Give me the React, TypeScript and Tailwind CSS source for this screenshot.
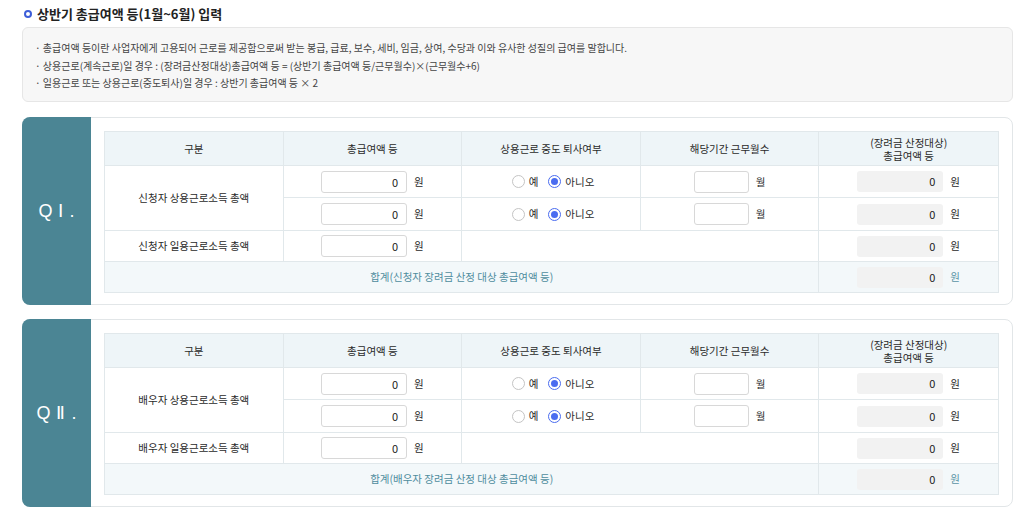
import React from "react";

const font = { fontFamily: '"Noto Sans CJK KR", "Noto Sans", sans-serif' };

function Radio({ checked, label }: { checked?: boolean; label: string }) {
  return (
    <span className="inline-flex items-center gap-[4px]">
      {checked ? (
        <span className="w-[13px] h-[13px] rounded-full border border-[#4a6cf0] flex items-center justify-center bg-white">
          <span className="w-[7px] h-[7px] rounded-full bg-[#4a6cf0]" />
        </span>
      ) : (
        <span className="w-[13px] h-[13px] rounded-full border border-[#c4c4c4] bg-white" />
      )}
      <span>{label}</span>
    </span>
  );
}

function Amount({ unit = "원", readOnly, teal }: { unit?: string; readOnly?: boolean; teal?: boolean }) {
  return (
    <div className="flex items-center justify-center gap-[7px]">
      <div
        className={
          readOnly
            ? "w-[86px] h-[21px] rounded-[3px] bg-[#f2f2f2] text-right pr-[8px] leading-[21px] text-[11px] text-[#222]"
            : "w-[86px] h-[22px] rounded-[3px] border border-[#d8d8d8] bg-white text-right pr-[8px] leading-[20px] text-[11px] text-[#222]"
        }
      >
        0
      </div>
      <span className={teal ? "text-[#5a95a6]" : ""}>{unit}</span>
    </div>
  );
}

function Month() {
  return (
    <div className="flex items-center justify-center gap-[7px]">
      <div className="w-[55px] h-[22px] rounded-[3px] border border-[#d8d8d8] bg-white" />
      <span>월</span>
    </div>
  );
}

function Section({ label, who }: { label: string; who: string }) {
  const cell = "border-r border-[#e1e8eb] last:border-r-0";
  return (
    <div className="flex h-[188px] border border-[#e2e6e8] rounded-[8px] bg-white">
      <div className="w-[69px] shrink-0 -my-px -ml-px bg-[#4b8594] rounded-l-[8px] flex items-center justify-center">
        <span className="text-white text-[18px] tracking-[6px] pl-[6px]" style={{ fontFamily: '"Liberation Sans", sans-serif' }}>
          {label}
        </span>
      </div>
      <div className="flex-1 p-[13px]">
        <div className="border border-[#e1e8eb] text-[10.5px] text-[#2a2a2a]">
          <div className="grid grid-cols-5 h-[34px] bg-[#eef5f8] border-b border-[#e1e8eb]">
            <div className={`${cell} flex items-center justify-center`}>구분</div>
            <div className={`${cell} flex items-center justify-center`}>총급여액 등</div>
            <div className={`${cell} flex items-center justify-center`}>상용근로 중도 퇴사여부</div>
            <div className={`${cell} flex items-center justify-center`}>해당기간 근무월수</div>
            <div className={`${cell} flex flex-col items-center justify-center leading-[13px]`}>
              <span>(장려금 산정대상)</span>
              <span>총급여액 등</span>
            </div>
          </div>
          <div className="grid grid-cols-5 border-b border-[#e1e8eb]">
            <div className="row-span-2 border-r border-[#e1e8eb] flex items-center justify-center">{who} 상용근로소득 총액</div>
            <div className="h-[32px] border-r border-b border-[#e1e8eb] flex items-center justify-center"><Amount /></div>
            <div className="h-[32px] border-r border-b border-[#e1e8eb] flex items-center justify-center gap-[10px] pl-[4px]">
              <Radio label="예" />
              <Radio checked label="아니오" />
            </div>
            <div className="h-[32px] border-r border-b border-[#e1e8eb] flex items-center justify-center"><Month /></div>
            <div className="h-[32px] border-b border-[#e1e8eb] flex items-center justify-center"><Amount readOnly /></div>
            <div className="h-[32px] border-r border-[#e1e8eb] flex items-center justify-center"><Amount /></div>
            <div className="h-[32px] border-r border-[#e1e8eb] flex items-center justify-center gap-[10px] pl-[4px]">
              <Radio label="예" />
              <Radio checked label="아니오" />
            </div>
            <div className="h-[32px] border-r border-[#e1e8eb] flex items-center justify-center"><Month /></div>
            <div className="h-[32px] flex items-center justify-center"><Amount readOnly /></div>
          </div>
          <div className="grid grid-cols-5 h-[31px] border-b border-[#e1e8eb]">
            <div className="border-r border-[#e1e8eb] flex items-center justify-center">{who} 일용근로소득 총액</div>
            <div className="border-r border-[#e1e8eb] flex items-center justify-center"><Amount /></div>
            <div className="col-span-2 border-r border-[#e1e8eb]" />
            <div className="flex items-center justify-center"><Amount readOnly /></div>
          </div>
          <div className="grid grid-cols-5 h-[30px] bg-[#f3f8fa]">
            <div className="col-span-4 border-r border-[#e1e8eb] flex items-center justify-center text-[#4f8d9e]">
              합계({who} 장려금 산정 대상 총급여액 등)
            </div>
            <div className="flex items-center justify-center"><Amount readOnly teal /></div>
          </div>
        </div>
      </div>
    </div>
  );
}

export default function App() {
  return (
    <div className="w-[1024px] h-[518px] bg-white pl-[22px] pr-[11px] pt-[4px] overflow-hidden" style={font}>
      <div className="flex items-center gap-[5px] h-[19px] pl-[2px]">
        <span className="w-[8px] h-[8px] rounded-full border-2 border-[#3d5ed8]" />
        <h1 className="text-[13px] font-bold text-[#222]">상반기 총급여액 등(1월~6월) 입력</h1>
      </div>
      <div className="mt-[4px] h-[75px] rounded-[6px] border border-[#e6e6e6] bg-[#f7f7f7] pl-[12px] pt-[11px] text-[10px] leading-[17.5px] text-[#444]">
        <p>· 총급여액 등이란 사업자에게 고용되어 근로를 제공함으로써 받는 봉급, 급료, 보수, 세비, 임금, 상여, 수당과 이와 유사한 성질의 급여를 말합니다.</p>
        <p>· 상용근로(계속근로)일 경우 : (장려금산정대상)총급여액 등 = (상반기 총급여액 등/근무월수)×(근무월수+6)</p>
        <p>· 일용근로 또는 상용근로(중도퇴사)일 경우 : 상반기 총급여액 등 × 2</p>
      </div>
      <div className="mt-[15px] flex flex-col gap-[14px]">
        <Section label="QⅠ." who="신청자" />
        <Section label="QⅡ." who="배우자" />
      </div>
    </div>
  );
}
